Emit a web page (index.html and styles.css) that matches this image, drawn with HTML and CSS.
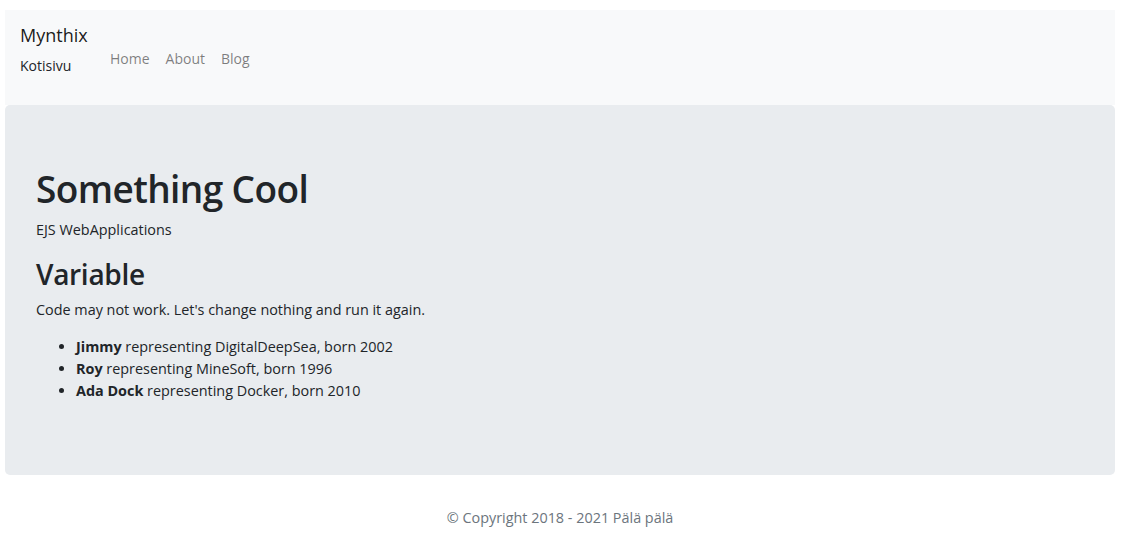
FILE: index.html
```html
<!DOCTYPE html>
<html lang="fi">
<head>
<meta charset="utf-8">
<title>Mynthix</title>
<link rel="stylesheet" href="styles.css">
</head>
<body>
<div class="page">
  <nav class="navbar">
    <div class="brand">
      <a class="brand-name" href="#">Mynthix</a>
      <p class="brand-sub">Kotisivu</p>
    </div>
    <ul class="nav">
      <li><a href="#">Home</a></li>
      <li><a href="#">About</a></li>
      <li><a href="#">Blog</a></li>
    </ul>
  </nav>
  <main class="jumbotron">
    <h1 class="title">Something Cool</h1>
    <p class="lead-text">EJS WebApplications</p>
    <h2 class="subtitle">Variable</h2>
    <p class="text">Code may not work. Let's change nothing and run it again.</p>
    <ul class="people">
      <li><strong>Jimmy</strong> representing DigitalDeepSea, born 2002</li>
      <li><strong>Roy</strong> representing MineSoft, born 1996</li>
      <li><strong>Ada Dock</strong> representing Docker, born 2010</li>
    </ul>
  </main>
  <footer class="footer">© Copyright 2018 - 2021 Pälä pälä</footer>
</div>
</body>
</html>
```

FILE: styles.css
```css
html, body {
  margin: 0;
  padding: 0;
  background: #ffffff;
}

body {
  font-family: "Open Sans", "Noto Sans", "Liberation Sans", sans-serif;
  color: #212529;
  font-size: 14.4px;
}

.page {
  width: 1110px;
  margin-left: 5px;
  padding-top: 10px;
}

.navbar {
  display: flex;
  align-items: flex-start;
  box-sizing: border-box;
  height: 95px;
  padding: 10px 15px 0;
  background: #f8f9fa;
}

.brand {
  display: flex;
  flex-direction: column;
  width: 82px;
}

.brand-name {
  font-size: 18px;
  line-height: 30px;
  color: rgba(0, 0, 0, 0.9);
  text-decoration: none;
}

.brand-sub {
  margin: 4px 0 0;
  font-size: 14px;
  line-height: 24px;
  color: #212529;
}

.nav {
  display: flex;
  list-style: none;
  margin: 27px 0 0;
  padding: 0;
}

.nav a {
  display: block;
  padding: 0 8px;
  font-size: 14px;
  line-height: 24px;
  color: rgba(0, 0, 0, 0.5);
  text-decoration: none;
}

.jumbotron {
  box-sizing: border-box;
  height: 370px;
  padding: 60px 31px 0;
  background: #e9ecef;
  border-radius: 5px;
}

.title {
  margin: 0;
  font-size: 37px;
  font-weight: 600;
  letter-spacing: -0.6px;
  line-height: 48px;
  color: #212529;
}

.lead-text {
  margin: 6px 0 0;
  line-height: 22px;
}

.subtitle {
  margin: 16px 0 0;
  font-size: 28px;
  font-weight: 600;
  letter-spacing: -0.3px;
  line-height: 34px;
}

.text {
  margin: 8px 0 0;
  line-height: 22px;
}

.people {
  margin: 15px 0 0;
  padding-left: 40px;
  line-height: 22px;
}

.people strong {
  font-weight: 700;
}

.footer {
  padding-top: 32px;
  text-align: center;
  font-size: 14.4px;
  line-height: 22px;
  color: #6c757d;
}
```
